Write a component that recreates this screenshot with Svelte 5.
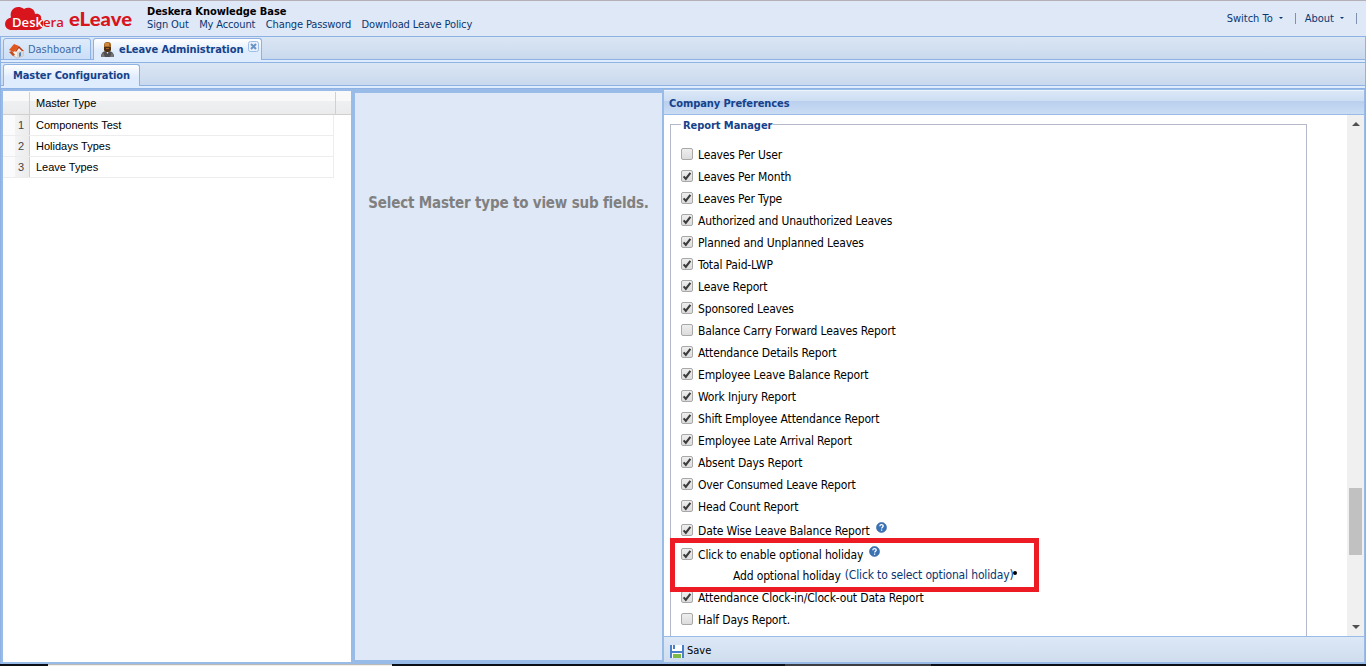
<script>
	let headerLinks = ['Sign Out', 'My Account', 'Change Password', 'Download Leave Policy'];
	let masterTypes = ['Components Test', 'Holidays Types', 'Leave Types'];
	let selected = $state(null);

	let reports = $state([
		{ label: 'Leaves Per User', checked: false },
		{ label: 'Leaves Per Month', checked: true },
		{ label: 'Leaves Per Type', checked: true },
		{ label: 'Authorized and Unauthorized Leaves', checked: true },
		{ label: 'Planned and Unplanned Leaves', checked: true },
		{ label: 'Total Paid-LWP', checked: true },
		{ label: 'Leave Report', checked: true },
		{ label: 'Sponsored Leaves', checked: true },
		{ label: 'Balance Carry Forward Leaves Report', checked: false },
		{ label: 'Attendance Details Report', checked: true },
		{ label: 'Employee Leave Balance Report', checked: true },
		{ label: 'Work Injury Report', checked: true },
		{ label: 'Shift Employee Attendance Report', checked: true },
		{ label: 'Employee Late Arrival Report', checked: true },
		{ label: 'Absent Days Report', checked: true },
		{ label: 'Over Consumed Leave Report', checked: true },
		{ label: 'Head Count Report', checked: true },
		{ label: 'Date Wise Leave Balance Report', checked: true, help: true, tall: true },
		{ label: 'Click to enable optional holiday', checked: true, help: true, tall: true, optional: true },
		{ label: 'Attendance Clock-in/Clock-out Data Report', checked: true },
		{ label: 'Half Days Report.', checked: false }
	]);
</script>

<div class="page">
	<header>
		<svg class="logo" width="134" height="32" viewBox="0 0 134 32">
			<path fill="#d8141c" d="M12 30C3 30 3 19 11 17.500C9 9 17 4 24 9C29 6 35 9 35 14C39 13 42 16 41 19C45 21 44 30 37 30Z" />
			<text x="12" y="27" class="brand" fill="#fff" textLength="31" lengthAdjust="spacingAndGlyphs">Desk</text>
			<text x="43" y="27" class="brand" fill="#d8141c" textLength="21" lengthAdjust="spacingAndGlyphs">era</text>
			<text x="69" y="26" class="product" fill="#d8141c" textLength="63" lengthAdjust="spacingAndGlyphs">eLeave</text>
		</svg>
		<div class="company">
			<b>Deskera Knowledge Base</b>
			<nav>
				{#each headerLinks as link}
					<a href="#top">{link}</a>
				{/each}
			</nav>
		</div>
		<div class="menus">
			<span>Switch To</span><i class="caret"></i><i class="sep"></i>
			<span>About</span><i class="caret"></i><i class="sep"></i>
		</div>
	</header>

	<div class="shell">
		<div class="tabs">
			<div class="tab dashboard">
				<svg width="17" height="16" viewBox="0 0 17 16">
					<path fill="#f3f0ec" stroke="#a9a9a9" stroke-width=".7" d="M4 8L10 4L15 8V13L9 15L4 12Z" />
					<path fill="#d9d5d0" d="M9 9L15 7V13L9 15Z" />
					<path fill="#e2571e" d="M1 7L6 1L11 3L6 9Z" />
					<path fill="#b8390f" d="M11 3L16 8L14 8L11 5L8 9L7 8Z" />
					<path fill="#5b82b5" d="M11 10L13 9V13L11 14Z" />
					<path fill="#c94a18" d="M1 9L4 8L7 12L5 13Z" />
				</svg>
				<span>Dashboard</span>
			</div>
			<div class="tab admin active">
				<svg width="15" height="16" viewBox="0 0 15 16">
					<path fill="#4e4e50" d="M1 15C1 10 4 9 7 9C11 9 14 10 14 15Z" />
					<path fill="#777" d="M1 15L3 10L5 15ZM10 15L12 10L14 15Z" />
					<path fill="#ddd" d="M6 9H9L7.5 12Z" />
					<rect x="4" y="0" width="7" height="10" rx="3" fill="#a8651f" />
					<path fill="#4b3018" d="M4 5H11V8L9 10H6L4 8Z" />
					<path fill="#a8651f" d="M6 6H9V7H6Z" />
					<path fill="#cc8b43" d="M5 1H9V4H5Z" />
				</svg>
				<span>eLeave Administration</span>
				<svg class="close" width="11" height="11" viewBox="0 0 11 11">
					<rect x=".5" y=".5" width="10" height="10" rx="2" fill="#e8f1fc" stroke="#9ebde6" />
					<path d="M3 3L8 8M8 3L3 8" stroke="#6c93c6" stroke-width="2" />
				</svg>
			</div>
		</div>
		<div class="tabs sub">
			<div class="tab master active"><span>Master Configuration</span></div>
		</div>

		<main>
			<section class="grid">
				<div class="grid-head">
					<div class="num"></div>
					<div class="col">Master Type</div>
				</div>
				{#each masterTypes as type, i}
					<div class="grid-row" class:selected={selected === i}>
						<div class="num">{i + 1}</div>
						<div class="col">{type}</div>
					</div>
				{/each}
			</section>

			<section class="fields"><b>Select Master type to view sub fields.</b></section>

			<section class="prefs">
				<h2>Company Preferences</h2>
				<div class="prefs-body">
					<div class="set">
						<div class="legend"><i></i><b>Report Manager</b><i class="rest"></i></div>
						<div class="set-body">
							{#each reports as report}
								<div class="row" class:tall={report.tall}>
									<button
										class="check"
										aria-label={report.label}
										onclick={() => (report.checked = !report.checked)}
									>
										{#if report.checked}
											<svg width="10" height="10" viewBox="0 0 10 10">
												<path d="M1.6 5.4L3.8 7.8L8.4 1.8" fill="none" stroke="#3c3c3c" stroke-width="2.1" />
											</svg>
										{/if}
									</button>
									<span class="label">{report.label}</span>
									{#if report.help}
										<svg class="help" width="11" height="11" viewBox="0 0 11 11">
											<circle cx="5.5" cy="5.5" r="5" fill="#3a73b5" stroke="#2f62a0" stroke-width=".6" />
											<path d="M3.8 4.2C3.9 1.9 7.4 2.1 7.2 4.1C7.1 5.2 5.6 5.2 5.6 6.5M5.6 7.5V8.8" fill="none" stroke="#fff" stroke-width="1.3" />
										</svg>
									{/if}
								</div>
								{#if report.optional}
									<div class="add">
										<span>Add optional holiday</span>
										<a href="#holiday">(Click to select optional holiday)</a><i class="dot"></i>
									</div>
								{/if}
							{/each}
							<div class="highlight"></div>
						</div>
					</div>
					<div class="scroll">
						<i class="up"></i>
						<div class="thumb"></div>
						<i class="down"></i>
					</div>
				</div>
				<footer>
					<svg width="14" height="13" viewBox="0 0 14 13">
						<path fill="#4a7fca" d="M0 0H14V13H0Z" />
						<path fill="#fff" d="M2 0H12V6H2ZM2 8H12V13H2Z" />
						<path fill="#4a7fca" d="M3 0H5V4H3Z" />
						<path fill="#7dba48" d="M3 9H11V13H3Z" />
					</svg>
					<span>Save</span>
				</footer>
			</section>
		</main>
	</div>
	<div class="edge"><i class="light"></i><i class="gray"></i></div>
</div>

<style>
	:global(body) {
		background: #fff;
	}

	.page {
		width: 1366px;
		height: 666px;
		display: flex;
		flex-direction: column;
		overflow: hidden;
		font-family: 'DejaVu Sans Condensed', 'DejaVu Sans', sans-serif;
		font-size: 11px;
		line-height: 13px;
		color: #000;
		background: #dfe8f6;
	}

	.page * {
		box-sizing: border-box;
	}

	a {
		color: #083772;
		text-decoration: none;
	}

	svg {
		display: block;
		flex-shrink: 0;
	}

	header {
		height: 36px;
		flex-shrink: 0;
		border-top: 1px solid #b5b0b8;
		display: flex;
	}

	.logo {
		margin-top: -1px;
	}

	.brand {
		font: 600 13px 'Open Sans', sans-serif;
	}

	.product {
		font: 900 18px Lato, sans-serif;
	}

	.company {
		margin-left: 13px;
		padding-top: 4px;
		white-space: nowrap;
	}

	.company b {
		display: block;
		letter-spacing: -0.06px;
	}

	nav {
		display: flex;
		gap: 10.5px;
		letter-spacing: -0.13px;
	}

	.menus {
		margin-left: auto;
		display: flex;
		align-items: center;
		height: 34px;
		color: #083772;
	}

	.caret {
		border: 2px solid transparent;
		border-top: 2px solid #083772;
		border-bottom: 0;
		margin: 0 12px 0 6px;
	}

	.sep {
		width: 1px;
		height: 11px;
		background: #7f8fae;
		margin-right: 9px;
	}

	.shell {
		height: 628px;
		border: 1px solid #8db2e3;
		border-bottom: 0;
		flex-shrink: 0;
	}

	.tabs {
		height: 25px;
		display: flex;
		align-items: flex-start;
		gap: 2px;
		padding: 1px 0 0 2px;
		background: linear-gradient(#dbe6f4, #c9d9ed 22px, #8db2e3 22px, #8db2e3 23px, #deecfd 23px);
	}

	.sub {
		height: 27px;
		border-top: 1px solid #8db2e3;
		border-bottom: 1px solid #8db2e3;
	}

	.tab {
		height: 22px;
		display: flex;
		align-items: center;
		border: 1px solid #8db2e3;
		border-radius: 3px 3px 0 0;
		background: linear-gradient(#dfebfa, #cbdff8);
		color: #416aa3;
		white-space: nowrap;
	}

	.tab.active {
		background: linear-gradient(#fff, #deecfd 60%);
		border-bottom: 0;
		color: #15428b;
		font-weight: bold;
		letter-spacing: -0.08px;
	}

	.dashboard {
		width: 88px;
		padding-left: 4px;
		gap: 3px;
		letter-spacing: -0.05px;
	}

	.dashboard svg {
		margin-top: 3px;
	}

	.admin {
		width: 169px;
		padding-left: 6px;
		gap: 4px;
	}

	.close {
		margin: -6px 0 0 1px;
	}

	.master {
		width: 137px;
		padding-left: 9px;
	}

	main {
		height: 575px;
		display: flex;
		background: #99bbe8;
		padding: 1px 1px 0 2px;
	}

	.grid {
		width: 348px;
		height: 571px;
		margin-top: 1px;
		background: #fff;
		font-family: 'Liberation Sans', Arial, sans-serif;
	}

	.grid-head {
		display: flex;
		height: 24px;
		padding: 1px 0 0 1px;
		border-bottom: 1px solid #d0d0d0;
		background: linear-gradient(#f9f9f9 10px, #eef0f1 10px, #ebebec);
		line-height: 22px;
	}

	.grid-head .num {
		width: 26px;
		border-right: 1px solid #d0d0d0;
	}

	.grid-head .col {
		width: 306px;
		padding-left: 6px;
		border-right: 1px solid #d0d0d0;
	}

	.grid-row {
		display: flex;
		height: 21px;
		width: 331px;
		line-height: 21px;
		border-bottom: 1px solid #ededed;
		border-right: 1px solid #ededed;
	}

	.grid-row .num {
		width: 27px;
		padding-right: 5px;
		text-align: right;
		color: #444;
		border-right: 1px solid #d0d0d0;
		background: linear-gradient(90deg, #fbfbfb 12px, #f2f3f4 12px, #ececed);
	}

	.grid-row .col {
		padding-left: 6px;
	}

	.grid-row.selected {
		background: #dfe8f6;
	}

	.fields {
		width: 307px;
		height: 567px;
		margin: 3px 2px 0 4px;
		background: #dfe8f6;
		text-align: center;
		padding-top: 101px;
		color: #808080;
		font-size: 15px;
		line-height: 18px;
		letter-spacing: -0.18px;
		white-space: nowrap;
	}

	.prefs {
		flex: 1;
		display: flex;
		flex-direction: column;
		height: 572px;
	}

	h2 {
		height: 25px;
		flex-shrink: 0;
		margin: 0;
		padding: 6px 5px;
		border-top: 1px solid #edf4fd;
		border-bottom: 1px solid #99bbe8;
		background: linear-gradient(#dae7f6, #cddef3 10px, #b8cfee 10px, #cbddf4);
		color: #15428b;
		font-size: 11px;
		letter-spacing: -0.08px;
	}

	.prefs-body {
		height: 521px;
		display: flex;
		background: #fff;
	}

	.set {
		width: 637px;
		margin: 4px 0 0 6px;
		display: flex;
		flex-direction: column;
	}

	.legend {
		height: 13px;
		display: flex;
		align-items: flex-start;
		color: #15428b;
	}

	.legend i {
		width: 11px;
		height: 1px;
		margin-top: 5px;
		background: #b5b8c8;
	}

	.legend b {
		padding: 0 1px 0 2px;
		letter-spacing: -0.06px;
	}

	.legend .rest {
		flex: 1;
	}

	.set-body {
		position: relative;
		flex: 1;
		margin-top: -8px;
		padding: 19px 0 0 10px;
		border: 1px solid #b5b8c8;
		border-width: 0 1px;
		font-size: 12px;
	}

	.row {
		height: 22px;
		display: flex;
		align-items: center;
		white-space: nowrap;
	}

	.row.tall {
		height: 24px;
		padding-top: 2px;
	}

	.check {
		width: 12px;
		height: 12px;
		flex-shrink: 0;
		margin: 0 5px 0 0;
		padding: 0;
		border: 1px solid #a8a8a8;
		border-radius: 2px;
		background: linear-gradient(#eee, #dcdcdc);
	}

	.label,
	.add {
		letter-spacing: -0.15px;
	}

	.label {
		padding-top: 2px;
	}

	.help {
		margin: -5px 0 0 6px;
	}

	.add {
		height: 21px;
		display: flex;
		align-items: center;
		padding: 1px 0 0 52px;
		white-space: nowrap;
	}

	.add a {
		margin: -2px 0 0 4px;
	}

	.dot {
		width: 4px;
		height: 4px;
		margin-top: -7px;
		margin-left: -1px;
		border-radius: 50%;
		background: #000;
	}

	/* callout drawn over the optional holiday rows */
	.highlight {
		position: absolute;
		left: -1px;
		top: 414px;
		width: 369px;
		height: 54px;
		border: 5px solid #ed1c24;
	}

	.scroll {
		width: 17px;
		margin-left: auto;
		padding: 7px 2px;
		background: #f0f0f0;
		display: flex;
		flex-direction: column;
	}

	.up,
	.down {
		align-self: center;
		border: 4px solid transparent;
	}

	.up {
		border-top: 0;
		border-bottom-color: #505050;
	}

	.down {
		margin-top: auto;
		border-bottom: 0;
		border-top-color: #505050;
	}

	.thumb {
		height: 67px;
		margin-top: 362px;
		background: #c1c1c1;
	}

	footer {
		height: 26px;
		display: flex;
		align-items: center;
		gap: 3px;
		padding: 1px 6px 0;
		border-top: 1px solid #99bbe8;
		background: linear-gradient(#dce8f6, #cfddee);
	}

	footer svg {
		margin-top: 3px;
	}

	.edge {
		height: 2px;
		display: flex;
		background: #0b0f18;
	}

	.edge .light {
		width: 344px;
		margin-left: 48px;
		background: linear-gradient(#b9b9b9 1px, #f3f0ec 1px);
	}

	.edge .gray {
		width: 146px;
		margin-left: 393px;
		background: #3c3e44;
	}
</style>
